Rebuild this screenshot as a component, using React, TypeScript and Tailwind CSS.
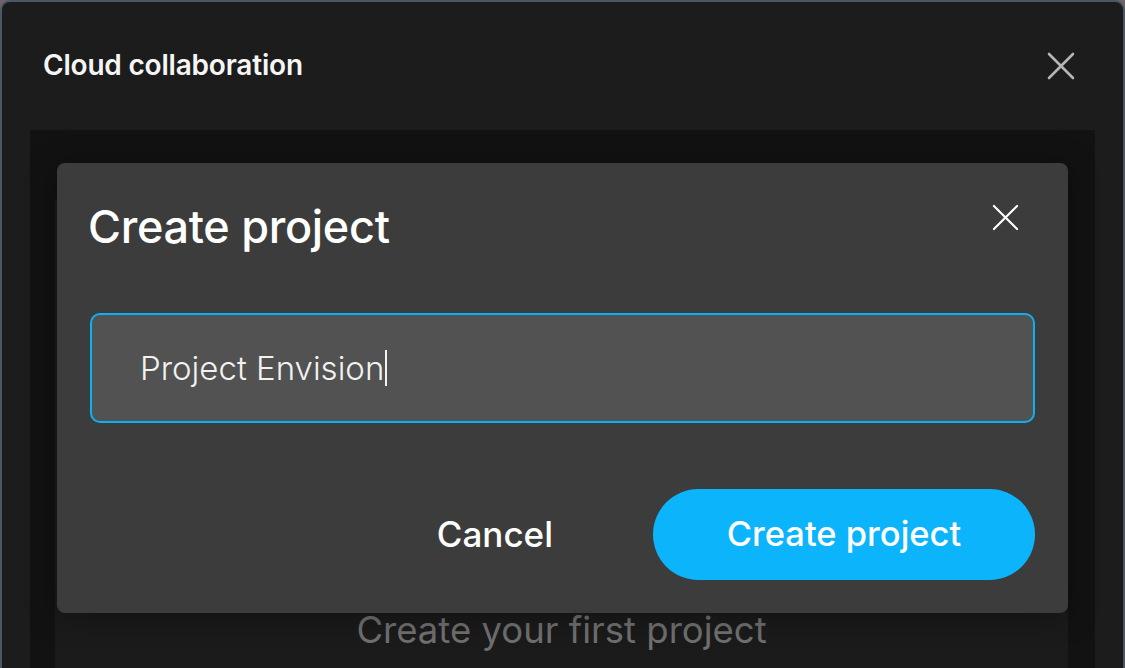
import React from 'react';

const CloseIcon: React.FC<{ className?: string; stroke?: number }> = ({ className, stroke = 2.5 }) => (
  <svg viewBox="0 0 28 28" className={className} fill="none" stroke="currentColor" strokeWidth={stroke} strokeLinecap="round">
    <path d="M2 2 L26 26 M26 2 L2 26" />
  </svg>
);

const CreateProjectModal: React.FC = () => (
  <div className="absolute left-[55px] top-[161px] w-[1011px] h-[450px] bg-[#3c3c3c] rounded-[8px] shadow-[0_4px_30px_rgba(0,0,0,0.35)] px-[33px] pt-[40px] flex flex-col">
    <div className="flex items-start justify-between">
      <h2 className="-ml-[2px] text-[45px] leading-[48px] font-medium text-white tracking-[-0.3px]">Create project</h2>
      <button className="mt-[1px] mr-[16px] w-[27px] h-[27px] text-white">
        <CloseIcon className="w-[27px] h-[27px]" stroke={2.2} />
      </button>
    </div>
    <div className="mt-[62px] h-[110px] rounded-[10px] border-2 border-[#0db1f2] bg-[#525252] flex items-center pl-[48px]">
      <span className="text-[33px] font-light text-[#f2f2f2] leading-none">Project Envision</span>
      <span className="w-[2px] h-[36px] bg-[#f2f2f2] ml-[1px]" />
    </div>
    <div className="mt-[66px] flex items-center justify-end">
      <button className="text-[35px] font-medium text-white mr-[100px] leading-none">Cancel</button>
      <button className="w-[382px] h-[91px] rounded-full bg-[#0cb4fc] text-[34.5px] font-medium text-white leading-none">
        Create project
      </button>
    </div>
  </div>
);

const App: React.FC = () => {
  return (
    <div className="w-[1125px] h-[668px] bg-[#6f6468] overflow-hidden" style={{ fontFamily: 'Inter, "Noto Sans", sans-serif' }}>
      <div className="relative w-full h-full rounded-t-[10px] border-2 border-b-0 border-[#4b5763] bg-[#1c1c1c] flex flex-col">
        <div className="h-[128px] flex items-start justify-between pl-[41px] pr-[48px] pt-[47px]">
          <h1 className="text-[28px] leading-[32px] font-semibold text-[#f5f5f5] tracking-[-0.2px]">Cloud collaboration</h1>
          <button className="mt-[3px] w-[28px] h-[28px] text-[#b5b5b5]">
            <CloseIcon className="w-[28px] h-[28px]" stroke={2.6} />
          </button>
        </div>
        <div className="flex-1 ml-[28px] mr-[28px] bg-[#121212] pl-[25px] pr-[27px] pt-[70px] flex">
          <div className="flex-1 bg-[#1b1b1b] flex flex-col items-center pt-[412px]">
            <p className="text-[36.5px] font-normal text-[#707070] leading-none">Create your first project</p>
          </div>
        </div>
        <CreateProjectModal />
      </div>
    </div>
  );
};

export default App;
